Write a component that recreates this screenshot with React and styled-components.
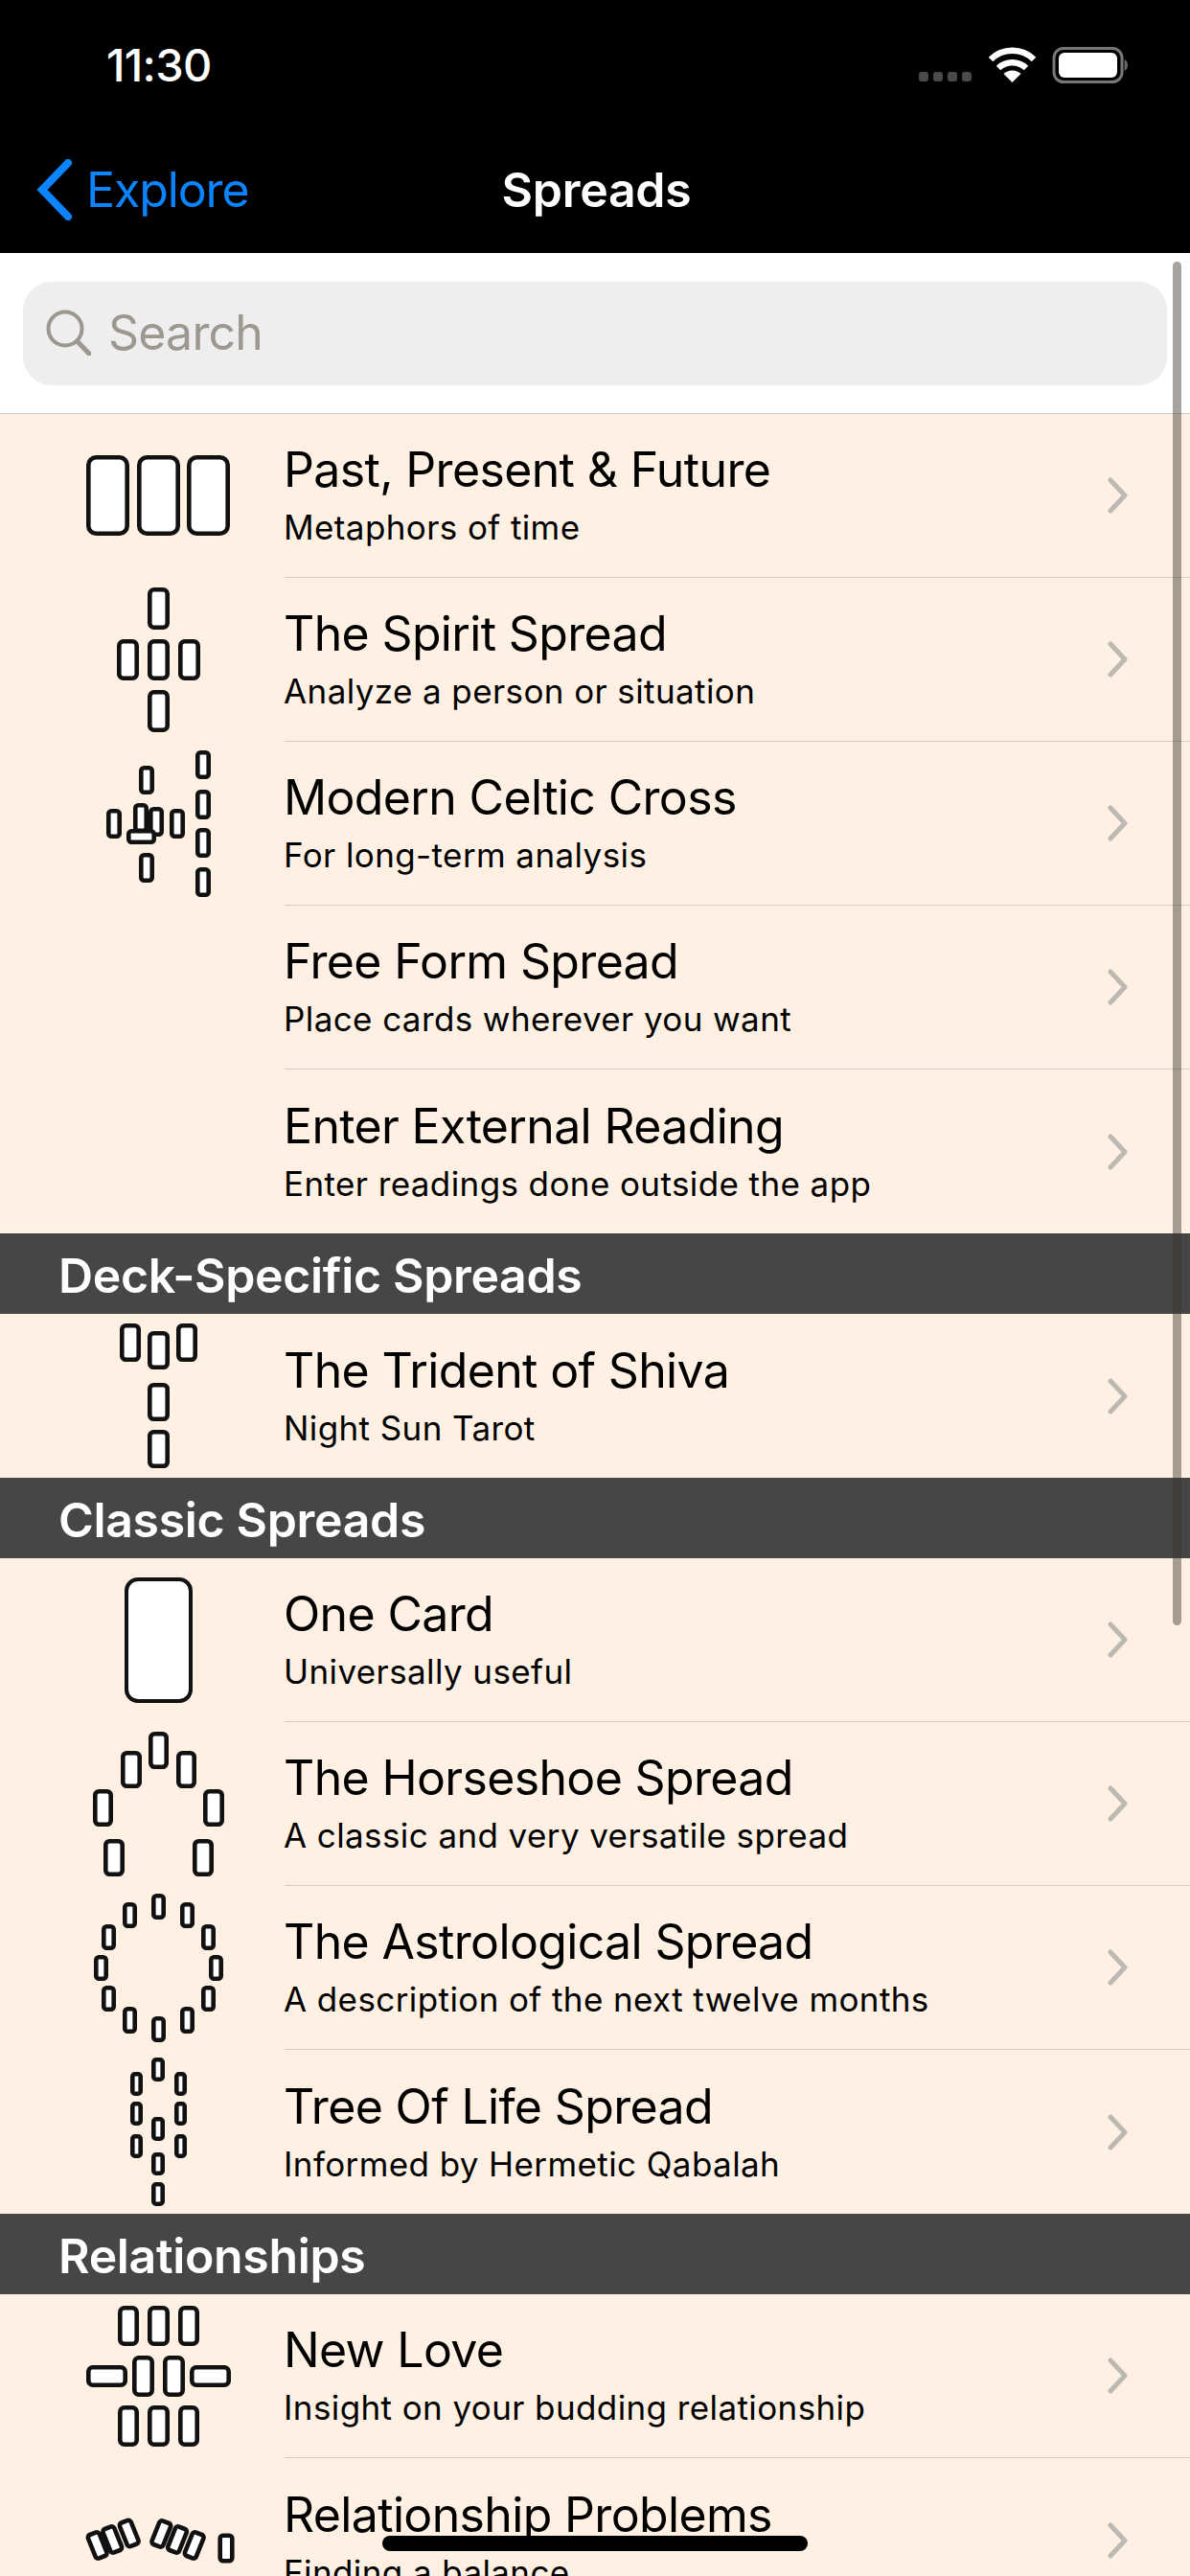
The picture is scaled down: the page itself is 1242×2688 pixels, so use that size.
import React from "react";
import styled, { createGlobalStyle } from "styled-components";

const Global = createGlobalStyle`
  html, body { margin: 0; padding: 0; background: #fff; }
  * { box-sizing: border-box; }
`;

const Screen = styled.div`
  position: relative;
  width: 1242px;
  height: 2688px;
  overflow: hidden;
  background: #fff;
  font-family: Inter, "Liberation Sans", sans-serif;
  color: #000;
`;

const Header = styled.header`
  height: 264px;
  background: #000;
  color: #fff;
`;

const StatusBar = styled.div`
  height: 132px;
  padding: 41px 65px 0 111px;
  display: flex;
  justify-content: space-between;
  align-items: flex-start;
`;

const Clock = styled.span`
  font-size: 47px;
  line-height: 54px;
  font-weight: 500;
  letter-spacing: -0.7px;
`;

const StatusIcons = styled.svg`
  display: block;
  margin-top: 8px;
`;

const NavBar = styled.nav`
  height: 132px;
  display: grid;
  grid-template-columns: 1fr auto 1fr;
  align-items: center;
`;

const BackLink = styled.div`
  display: flex;
  align-items: center;
  gap: 14px;
  padding-left: 38px;
  color: #0a84ff;
  font-size: 50px;
  letter-spacing: -1.1px;
`;

const NavTitle = styled.div`
  padding-left: 3px;
  font-size: 50px;
  font-weight: 600;
  letter-spacing: -0.3px;
`;

const SearchArea = styled.div`
  height: 168px;
  padding: 30px 24px 0;
  border-bottom: 1px solid #cfcac3;
`;

const SearchField = styled.div`
  height: 108px;
  border-radius: 30px;
  background: #eeeeee;
  display: flex;
  align-items: center;
  gap: 18px;
  padding: 0 0 2px 24px;
  color: #9c978f;
  font-size: 50px;
  letter-spacing: -0.8px;
`;

const Row = styled.div`
  height: 171px;
  background: #fef1e3;
  display: flex;
`;

const RowGlyph = styled.svg`
  flex: none;
  display: block;
  width: 297px;
  height: 171px;
`;

const RowBody = styled.div`
  flex: 1;
  min-width: 0;
  display: flex;
  align-items: center;
  padding-right: 63px;
  border-bottom: ${(p) => (p.$last ? "none" : "1px solid #d3cdc5")};
`;

const RowText = styled.div`
  flex: 1;
  min-width: 0;
  margin-left: -1px;
  padding-bottom: 4px;
`;

const RowTitle = styled.div`
  font-size: 50px;
  line-height: 64px;
  letter-spacing: -0.65px;
`;

const RowSubtitle = styled.div`
  font-size: 35px;
  line-height: 44px;
  margin-top: 6px;
  letter-spacing: 0.4px;
`;

const SectionHeader = styled.div`
  height: 84px;
  background: #464646;
  color: #fff;
  padding: 3px 0 0 61px;
  display: flex;
  align-items: center;
  font-size: 50px;
  font-weight: 600;
  letter-spacing: -0.35px;
`;

const ScrollThumb = styled.div`
  position: absolute;
  left: 1224px;
  top: 273px;
  width: 9px;
  height: 1423px;
  border-radius: 5px;
  background: rgba(60, 50, 40, 0.45);
`;

const HomeIndicator = styled.div`
  position: absolute;
  left: 399px;
  top: 2646px;
  width: 444px;
  height: 16px;
  border-radius: 8px;
  background: #000;
`;

// Card outlines are [left, top, right, bottom] in row coordinates.
const Card = ({ box, stroke = 4.6, radius = 6 }) => {
  const [x0, y0, x1, y1] = box;
  return (
    <rect
      x={x0 + stroke / 2}
      y={y0 + stroke / 2}
      width={x1 - x0 - stroke}
      height={y1 - y0 - stroke}
      rx={radius}
      fill="#fff"
      stroke="#111"
      strokeWidth={stroke}
    />
  );
};

const layouts = {
  past: { radius: 8, cards: [[90, 43, 135, 127], [143, 43, 188, 127], [195, 43, 240, 127]] },
  spirit: {
    radius: 4.5,
    cards: [[154, 10, 177, 54], [122, 64, 145, 107], [154, 64, 177, 107], [186, 64, 209, 107], [154, 117, 177, 161]],
  },
  celtic: {
    radius: 3,
    cards: [
      [145, 25, 161, 55], [111, 70, 127, 101], [139, 64, 155, 95], [155, 68, 171, 99],
      [132, 91, 163, 107], [177, 70, 193, 101], [145, 116, 161, 147],
      [204, 9, 220, 39], [204, 50, 220, 81], [204, 90, 220, 121], [204, 131, 220, 162],
    ],
  },
  trident: {
    radius: 4,
    cards: [[125, 10, 147, 50], [154, 18, 177, 58], [184, 10, 206, 50], [154, 72, 177, 112], [154, 121, 177, 161]],
  },
  one: { radius: 12, stroke: 4, cards: [[130, 20, 201, 151]] },
  horseshoe: {
    radius: 4,
    cards: [
      [155, 10, 176, 49], [126, 30, 148, 69], [184, 30, 205, 69], [97, 70, 118, 109],
      [212, 70, 234, 109], [108, 122, 130, 161], [201, 122, 223, 161],
    ],
  },
  astrological: {
    radius: 3,
    cards: [
      [158, 8, 173, 35], [128, 17, 143, 44], [188, 17, 203, 44], [106, 40, 121, 67], [210, 40, 225, 67],
      [98, 72, 113, 99], [218, 72, 233, 99], [106, 104, 121, 131], [210, 104, 225, 131],
      [128, 126, 143, 154], [188, 126, 203, 154], [158, 136, 173, 163],
    ],
  },
  tree: {
    radius: 2.5,
    cards: [
      [158, 8, 172, 33], [136, 23, 149, 48], [182, 23, 195, 48], [136, 54, 149, 79], [182, 54, 195, 79],
      [136, 88, 149, 113], [182, 88, 195, 113], [158, 70, 172, 95], [158, 107, 172, 131], [158, 138, 172, 163],
    ],
  },
  love: {
    radius: 4.5,
    cards: [
      [123, 12, 145, 54], [154, 12, 177, 54], [186, 12, 208, 54],
      [138, 64, 161, 107], [170, 64, 193, 107], [90, 74, 133, 97], [198, 74, 241, 97],
      [123, 116, 145, 159], [154, 116, 177, 159], [186, 116, 208, 159],
    ],
  },
};

// Fanned cards: centre x, centre y, tilt in degrees.
const fan = [
  [101.7, 91, -22], [117.3, 85, -22], [134.7, 78.5, -22],
  [168.3, 79, 22], [185, 85, 22], [202.7, 91, 22], [236, 94, 0],
];

const Glyph = ({ name }) => {
  const layout = layouts[name];
  return (
    <RowGlyph viewBox="0 0 297 171">
      {layout &&
        layout.cards.map((box, i) => (
          <Card key={i} box={box} stroke={layout.stroke} radius={layout.radius} />
        ))}
      {name === "problems" &&
        fan.map(([cx, cy, a], i) => (
          <g key={i} transform={`rotate(${a} ${cx} ${cy})`}>
            <Card box={[cx - 8.6, cy - 15.5, cx + 8.6, cy + 15.5]} radius={3} />
          </g>
        ))}
    </RowGlyph>
  );
};

const Chevron = () => (
  <svg width="24" height="38" viewBox="0 0 24 38" fill="none" style={{ flex: "none" }}>
    <path d="M4 3l15 16L4 35" stroke="#bdb9b2" strokeWidth="5" strokeLinecap="round" strokeLinejoin="round" />
  </svg>
);

const SpreadRow = ({ glyph, title, subtitle, last }) => (
  <Row>
    <Glyph name={glyph} />
    <RowBody $last={last}>
      <RowText>
        <RowTitle>{title}</RowTitle>
        <RowSubtitle>{subtitle}</RowSubtitle>
      </RowText>
      <Chevron />
    </RowBody>
  </Row>
);

const sections = [
  {
    rows: [
      ["past", "Past, Present & Future", "Metaphors of time"],
      ["spirit", "The Spirit Spread", "Analyze a person or situation"],
      ["celtic", "Modern Celtic Cross", "For long-term analysis"],
      ["", "Free Form Spread", "Place cards wherever you want"],
      ["", "Enter External Reading", "Enter readings done outside the app"],
    ],
  },
  {
    heading: "Deck-Specific Spreads",
    rows: [["trident", "The Trident of Shiva", "Night Sun Tarot"]],
  },
  {
    heading: "Classic Spreads",
    rows: [
      ["one", "One Card", "Universally useful"],
      ["horseshoe", "The Horseshoe Spread", "A classic and very versatile spread"],
      ["astrological", "The Astrological Spread", "A description of the next twelve months"],
      ["tree", "Tree Of Life Spread", "Informed by Hermetic Qabalah"],
    ],
  },
  {
    heading: "Relationships",
    rows: [
      ["love", "New Love", "Insight on your budding relationship"],
      ["problems", "Relationship Problems", "Finding a balance"],
    ],
  },
];

export default function App() {
  return (
    <Screen>
      <Global />
      <Header>
        <StatusBar>
          <Clock>11:30</Clock>
          <StatusIcons width="218" height="38" viewBox="0 0 218 38" fill="none">
            {[0, 15, 30, 45].map((x) => (
              <rect key={x} x={x} y="26" width="10" height="10" rx="3" fill="#4a4a4a" />
            ))}
            <path d="M75 13a32 32 0 0 1 45 0" stroke="#fff" strokeWidth="6.5" />
            <path d="M83 22a21 21 0 0 1 29 0" stroke="#fff" strokeWidth="6.5" />
            <path d="M97.5 37l-9-9a13 13 0 0 1 18 0z" fill="#fff" />
            <rect x="141" y="1.5" width="71" height="35" rx="10" stroke="#777" strokeWidth="3" />
            <rect x="146" y="6" width="61" height="26" rx="6" fill="#fff" />
            <path d="M214.5 13v12c2.5-1 3.5-3.5 3.5-6s-1-5-3.5-6z" fill="#666" />
          </StatusIcons>
        </StatusBar>
        <NavBar>
          <BackLink>
            <svg width="38" height="64" viewBox="0 0 38 64" fill="none">
              <path d="M33 4L6 32l27 28" stroke="#0a84ff" strokeWidth="8" strokeLinecap="round" strokeLinejoin="miter" />
            </svg>
            Explore
          </BackLink>
          <NavTitle>Spreads</NavTitle>
          <span />
        </NavBar>
      </Header>
      <SearchArea>
        <SearchField>
          <svg width="47" height="48" viewBox="0 0 47 48" fill="none">
            <circle cx="20" cy="20" r="17.5" stroke="#9c978f" strokeWidth="4" />
            <path d="M32.5 33L45 46" stroke="#9c978f" strokeWidth="5" strokeLinecap="round" />
          </svg>
          Search
        </SearchField>
      </SearchArea>
      {sections.map((section, s) => (
        <section key={s}>
          {section.heading && <SectionHeader>{section.heading}</SectionHeader>}
          {section.rows.map(([glyph, title, subtitle], i) => (
            <SpreadRow
              key={title}
              glyph={glyph}
              title={title}
              subtitle={subtitle}
              last={i === section.rows.length - 1}
            />
          ))}
        </section>
      ))}
      <ScrollThumb />
      <HomeIndicator />
    </Screen>
  );
}
